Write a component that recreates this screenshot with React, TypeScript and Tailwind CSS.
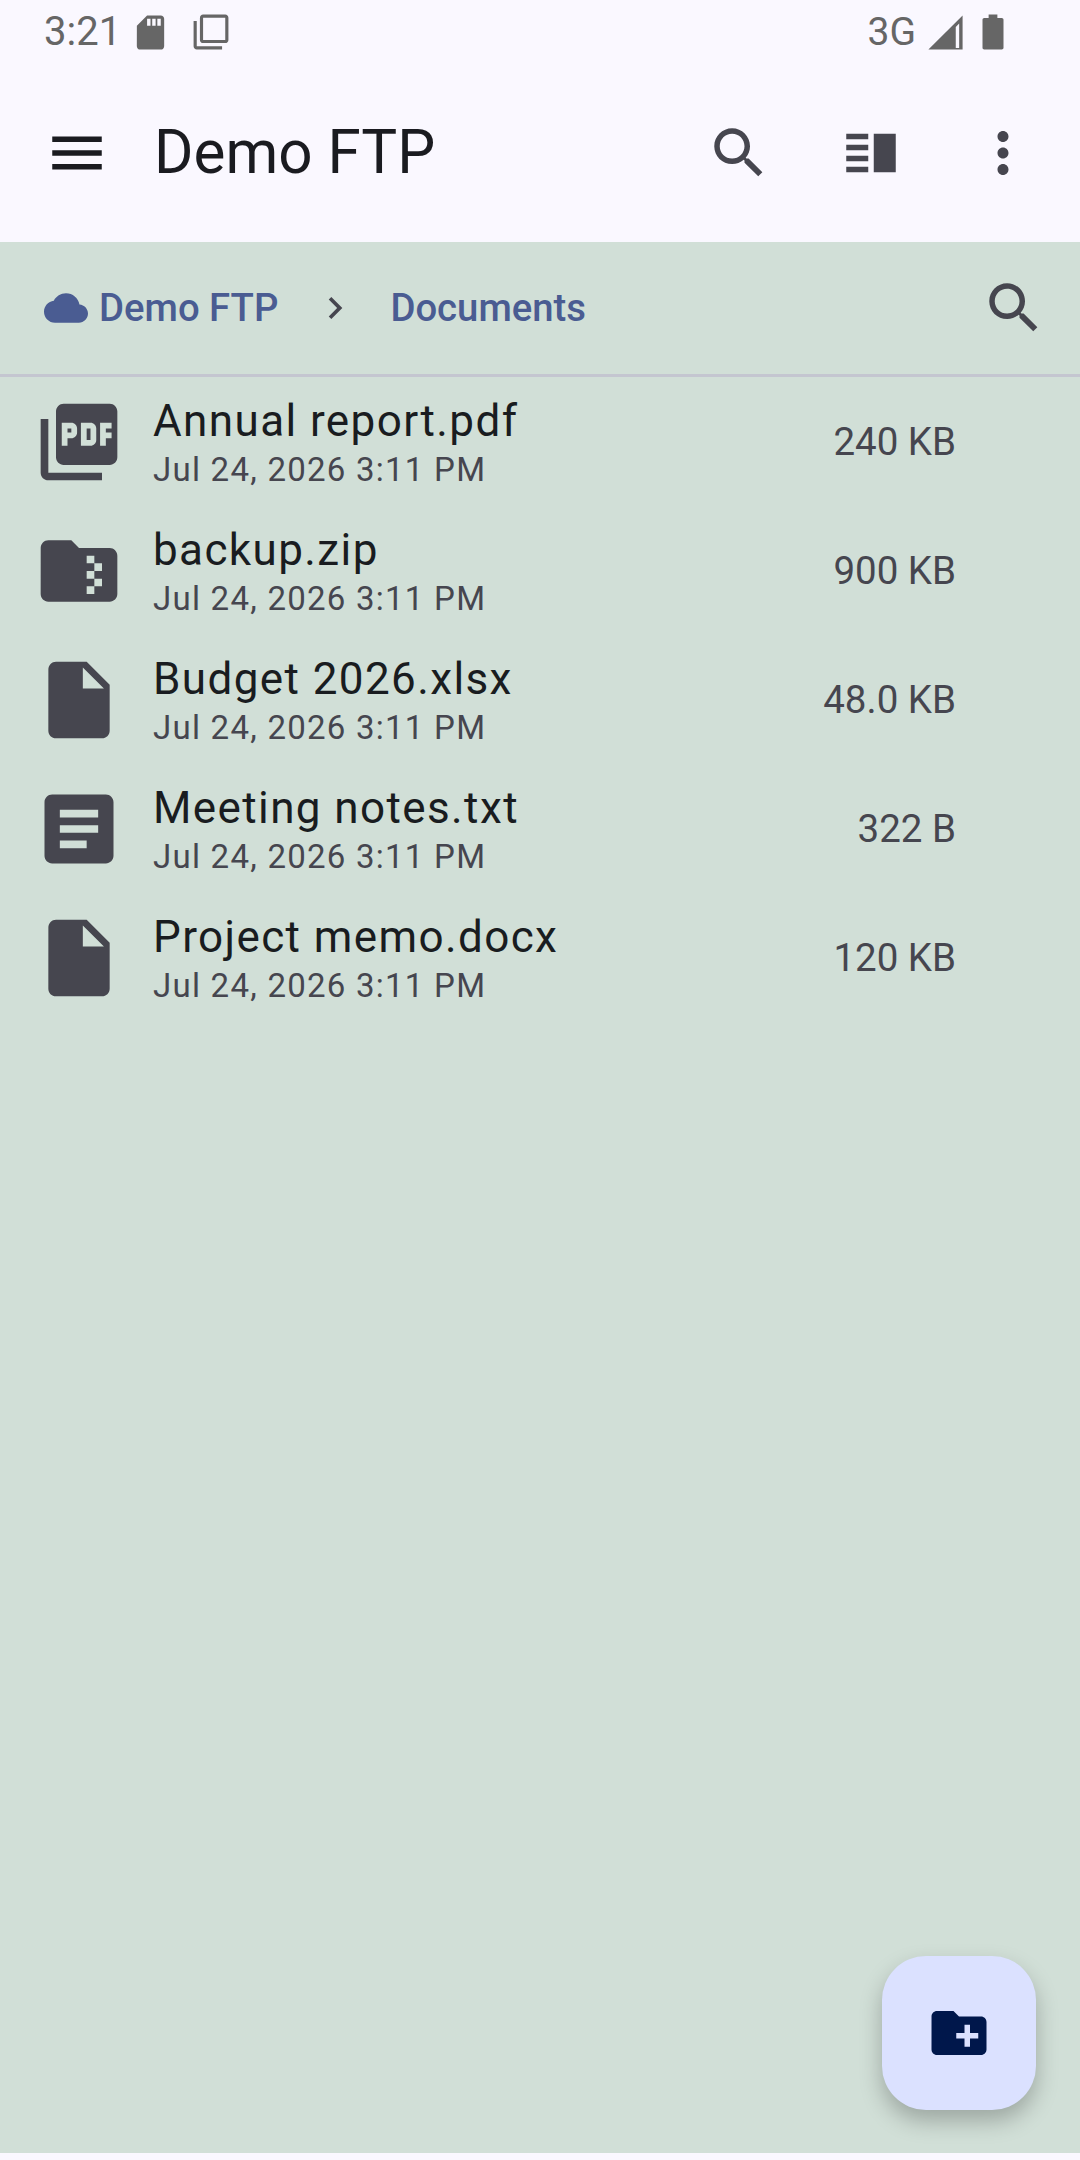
import type { ReactNode } from "react";

const PATHS = {
  menu: "M3 18h18v-2H3v2zm0-5h18v-2H3v2zm0-7v2h18V6H3z",
  search:
    "M15.5 14h-.79l-.28-.27C15.41 12.59 16 11.11 16 9.5 16 5.91 13.09 3 9.5 3S3 5.91 3 9.5 5.91 16 9.5 16c1.61 0 3.09-.59 4.23-1.57l.27.28v.79l5 4.99L20.49 19l-4.99-5zm-6 0C7.01 14 5 11.99 5 9.5S7.01 5 9.5 5 14 7.01 14 9.5 11.99 14 9.5 14z",
  split: "M3 15h8v-2H3v2zm0 4h8v-2H3v2zm0-8h8V9H3v2zm0-6v2h8V5H3zm10 0h8v14h-8V5z",
  more: "M12 8c1.1 0 2-.9 2-2s-.9-2-2-2-2 .9-2 2 .9 2 2 2zm0 2c-1.1 0-2 .9-2 2s.9 2 2 2 2-.9 2-2-.9-2-2-2zm0 6c-1.1 0-2 .9-2 2s.9 2 2 2 2-.9 2-2-.9-2-2-2z",
  cloud:
    "M19.35 10.04C18.67 6.59 15.64 4 12 4 9.11 4 6.6 5.64 5.35 8.04 2.34 8.36 0 10.91 0 14c0 3.31 2.69 6 6 6h13c2.76 0 5-2.24 5-5 0-2.64-2.05-4.78-4.65-4.96z",
  chevron: "M10 6L8.59 7.41 13.17 12l-4.58 4.59L10 18l6-6z",
  pdf: "M20 2H8c-1.1 0-2 .9-2 2v12c0 1.1.9 2 2 2h12c1.1 0 2-.9 2-2V4c0-1.1-.9-2-2-2zm-8.5 7.5c0 .83-.67 1.5-1.5 1.5H9v2H7.5V7H10c.83 0 1.5.67 1.5 1.5v1zm5 2c0 .83-.67 1.5-1.5 1.5h-2.5V7H15c.83 0 1.5.67 1.5 1.5v3zm4-3H19v1h1.5V11H19v2h-1.5V7h3v1.5zM9 9.5h1v-1H9v1zM4 6H2v14c0 1.1.9 2 2 2h14v-2H4V6zm10 5.5h1v-3h-1v3z",
  zip: "M20 6h-8l-2-2H4c-1.1 0-1.99.9-1.99 2L2 18c0 1.1.9 2 2 2h16c1.1 0 2-.9 2-2V8c0-1.1-.9-2-2-2zm-2 6h-2v2h2v2h-2v2h-2v-2h2v-2h-2v-2h2v-2h-2V8h2v2h2v2z",
  file: "M6 2c-1.1 0-1.99.9-1.99 2L4 20c0 1.1.89 2 1.99 2H18c1.1 0 2-.9 2-2V8l-6-6H6zm7 7V3.5L18.5 9H13z",
  text: "M19 3H5c-1.1 0-2 .9-2 2v14c0 1.1.9 2 2 2h14c1.1 0 2-.9 2-2V5c0-1.1-.9-2-2-2zm-5 14H7v-2h7v2zm3-4H7v-2h10v2zm0-4H7V7h10v2z",
  newFolder:
    "M20 6h-8l-2-2H4c-1.11 0-1.99.89-1.99 2L2 18c0 1.11.89 2 2 2h16c1.11 0 2-.89 2-2V8c0-1.11-.89-2-2-2zm-1 8h-3v3h-2v-3h-3v-2h3V9h2v3h3v2z",
  sd: "M18 2h-8L4.02 8 4 20c0 1.1.9 2 2 2h12c1.1 0 2-.9 2-2V4c0-1.1-.9-2-2-2zm-6 6h-2V4h2v4zm3 0h-2V4h2v4zm3 0h-2V4h2v4z",
  copy: "M3 5H1v16c0 1.1.9 2 2 2h16v-2H3V5zm18-4H7c-1.1 0-2 .9-2 2v14c0 1.1.9 2 2 2h14c1.1 0 2-.9 2-2V3c0-1.1-.9-2-2-2zm0 16H7V3h14v14z",
  signal: "M2 22h20V2L2 22zm18-1h-2V8.8l2-2V21z",
  battery: "M17 4h-2.5V2h-5v2H7c-.55 0-1 .45-1 1v16c0 .55.45 1 1 1h10c.55 0 1-.45 1-1V5c0-.55-.45-1-1-1z",
};

function Icon({ d, className }: { d: string; className: string }) {
  return (
    <svg viewBox="0 0 24 24" fill="currentColor" className={className}>
      <path d={d} />
    </svg>
  );
}

function ToolButton({ children }: { children: ReactNode }) {
  return <div className="w-[132px] h-[132px] flex items-center justify-center shrink-0">{children}</div>;
}

const files = [
  { name: "Annual report.pdf", size: "240 KB", icon: PATHS.pdf },
  { name: "backup.zip", size: "900 KB", icon: PATHS.zip },
  { name: "Budget 2026.xlsx", size: "48.0 KB", icon: PATHS.file },
  { name: "Meeting notes.txt", size: "322 B", icon: PATHS.text },
  { name: "Project memo.docx", size: "120 KB", icon: PATHS.file },
];

function FileRow({ name, size, icon }: { name: string; size: string; icon: string }) {
  return (
    <div className="h-[129px] flex items-center pl-[33px] pr-[124px]">
      <Icon d={icon} className="w-[92px] h-[92px] text-[#46464f] shrink-0" />
      <div className="ml-[28px] pt-[3px] flex-1 flex flex-col">
        <span className="text-[44px] leading-[50px] tracking-[1.4px] text-[#191c20]">{name}</span>
        <span className="text-[33px] leading-[40px] mt-[4px] tracking-[1.25px] text-[#46464f]">Jul 24, 2026 3:11 PM</span>
      </div>
      <span className="text-[38.5px] text-[#46464f]">{size}</span>
    </div>
  );
}

export default function App() {
  return (
    <div className="relative w-[1080px] h-[2160px] overflow-hidden bg-[#faf8ff] font-['Roboto',sans-serif]">
      {/* status bar */}
      <div className="h-[64px] flex items-center pl-[44px] pr-[66px] text-[#666666]">
        <span className="text-[40px]">3:21</span>
        <Icon d={PATHS.sd} className="w-[41px] h-[41px] ml-[9px]" />
        <Icon d={PATHS.copy} className="w-[38px] h-[38px] ml-[21px]" />
        <span className="ml-auto text-[39px]">3G</span>
        <Icon d={PATHS.signal} className="w-[41px] h-[41px] ml-[9px]" />
        <Icon d={PATHS.battery} className="w-[42px] h-[42px] ml-[6px]" />
      </div>

      {/* toolbar */}
      <div className="h-[178px] flex items-center px-[11px]">
        <ToolButton>
          <Icon d={PATHS.menu} className="w-[66px] h-[66px] text-[#1a1b20]" />
        </ToolButton>
        <span className="ml-[11px] text-[60.2px] text-[#1a1b20]">Demo FTP</span>
        <div className="ml-auto flex">
          <ToolButton>
            <Icon d={PATHS.search} className="w-[66px] h-[66px] text-[#46464f]" />
          </ToolButton>
          <ToolButton>
            <Icon d={PATHS.split} className="w-[66px] h-[66px] text-[#46464f]" />
          </ToolButton>
          <ToolButton>
            <Icon d={PATHS.more} className="w-[66px] h-[66px] text-[#46464f]" />
          </ToolButton>
        </div>
      </div>

      {/* content */}
      <div className="h-[1911px] bg-[#d1dfd7]">
        <div className="h-[135px] flex items-center pl-[44px] border-b-[3px] border-[#c4c6d0]">
          <Icon d={PATHS.cloud} className="w-[44px] h-[44px] text-[#4a5c92]" />
          <span className="ml-[11px] text-[38.3px] font-medium text-[#4a5c92]">Demo FTP</span>
          <Icon d={PATHS.chevron} className="w-[44px] h-[44px] ml-[35px] text-[#46464f]" />
          <span className="ml-[33px] text-[38.3px] font-medium text-[#4a5c92]">Documents</span>
          <div className="ml-auto">
            <ToolButton>
              <Icon d={PATHS.search} className="w-[66px] h-[66px] text-[#46464f]" />
            </ToolButton>
          </div>
        </div>
        {files.map((f) => (
          <FileRow key={f.name} {...f} />
        ))}
      </div>

      {/* fab */}
      <div className="absolute left-[882px] top-[1956px] w-[154px] h-[154px] rounded-[44px] bg-[#dbe1ff] shadow-[0_11px_22px_rgba(0,0,0,0.25)] flex items-center justify-center">
        <Icon d={PATHS.newFolder} className="w-[66px] h-[66px] text-[#00174b]" />
      </div>
    </div>
  );
}
